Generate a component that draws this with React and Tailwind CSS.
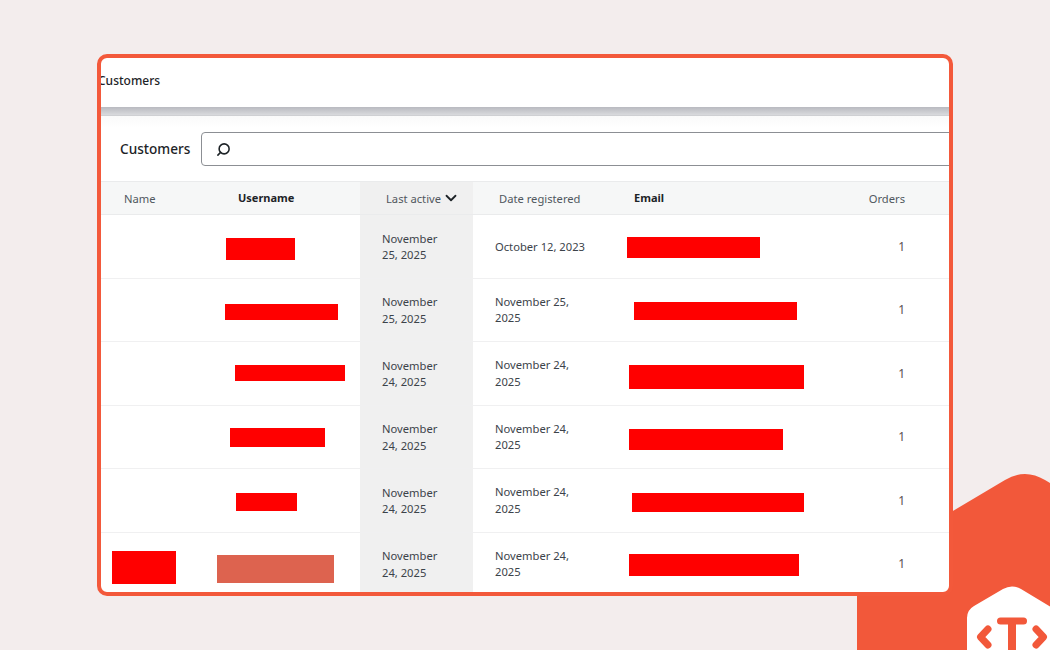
import { ChevronDown, Search } from 'lucide-react';

const rows = [
    { active: ['November', '25, 2025'], registered: ['October 12, 2023'], user: 'ml-[10px] mt-[23px] w-[69px] h-[22px]', email: 'ml-[15px] mt-[22px] w-[133px] h-[21px]' },
    { active: ['November', '25, 2025'], registered: ['November 25,', '2025'], user: 'ml-[9px] mt-[25px] w-[113px] h-[16px]', email: 'ml-[22px] mt-[23px] w-[163px] h-[18px]' },
    { active: ['November', '24, 2025'], registered: ['November 24,', '2025'], user: 'ml-[19px] mt-[23px] w-[110px] h-[16px]', email: 'ml-[17px] mt-[23px] w-[175px] h-[24px]' },
    { active: ['November', '24, 2025'], registered: ['November 24,', '2025'], user: 'ml-[14px] mt-[22px] w-[95px] h-[19px]', email: 'ml-[17px] mt-[23px] w-[154px] h-[21px]' },
    { active: ['November', '24, 2025'], registered: ['November 24,', '2025'], user: 'ml-[20px] mt-[24px] w-[61px] h-[18px]', email: 'ml-[20px] mt-[24px] w-[172px] h-[19px]' },
    { active: ['November', '24, 2025'], registered: ['November 24,', '2025'], name: 'ml-[11px] mt-[18px] w-[64px] h-[33px]', user: 'ml-[1px] mt-[22px] w-[117px] h-[28px] !bg-[#dd634f]', email: 'ml-[17px] mt-[21px] w-[170px] h-[22px]' },
];

const gridCols = 'grid grid-cols-[115px_144px_113px_139px_1fr_109px]';

function Bar({ className }) {
    if (!className) return <div />;
    return <div className={`bg-[#ff0000] ${className}`} />;
}

function Backdrop() {
    return (
        <svg className="absolute inset-0" width="1050" height="650" viewBox="0 0 1050 650">
            <path d="M857 568 L1005 480 Q1025 468 1045 480 L1050 483 V650 H857 Z" fill="#f2583a" />
            <path d="M967 650 V618 Q967 610 974 606 L1003 589 Q1012 584 1021 589 L1050 606.5 V650 Z" fill="#ffffff" />
            <g fill="none" stroke="#f2583a" strokeWidth="7" strokeLinecap="round" strokeLinejoin="round">
                <path d="M988 629 L980.500 637 L988 645" />
                <path d="M1036 629 L1043.500 637 L1036 645" />
                <path d="M1000.500 621 H1023.500" />
            </g>
            <rect x="1008" y="621" width="8" height="29" fill="#f2583a" />
        </svg>
    );
}

export default function App() {
    return (
        <div
            className="relative w-[1050px] h-[650px] overflow-hidden bg-[#f3eded] pt-[54px] pl-[97px] text-[11.200px] leading-[16.5px] text-[#3c434a]"
            style={{ fontFamily: '"Noto Sans", sans-serif' }}
        >
            <Backdrop />
            <div className="relative w-[856px] h-[542px] overflow-hidden rounded-[10px] border-4 border-[#f3593b] bg-white">
                {/* Top bar */}
                <div className="h-[49px] flex items-center -ml-[3px] text-[12px] font-medium text-[#1d2327] pb-[3px]">
                    Customers
                </div>
                <div className="h-[9px] bg-gradient-to-b from-[#b9bac0] to-[#d9dadd] border-b border-[#cfd0d3]" />

                {/* Search */}
                <div className="h-[65px] flex items-center gap-[11px] pl-[19px] pt-[1px] bg-gradient-to-b from-[#fafafa] to-white to-[12px]">
                    <div className="text-[13.600px] font-medium text-[#1d2327] w-[70px] shrink-0">Customers</div>
                    <div className="w-[800px] h-[34px] shrink-0 flex items-center pl-[14px] bg-white border border-[#8c8f94] rounded-[4px]">
                        <Search size={15} strokeWidth={2.5} className="-scale-x-100 text-[#1d2327]" />
                    </div>
                </div>

                {/* Table head */}
                <div className={`${gridCols} h-[34px] items-center bg-[#f6f7f7] border-y border-[#eaebec] text-[#50575e]`}>
                    <div className="pl-[23px] pt-[3px]">Name</div>
                    <div className="pl-[22px] text-[11px] font-bold text-[#1d2327]">Username</div>
                    <div className="h-full flex items-center pl-[26px] bg-[#f0f0f0]">
                        <span className="pt-[3px]">Last active</span>
                        <ChevronDown size={18} strokeWidth={2.4} className="text-[#1d2327] ml-[1px]" />
                    </div>
                    <div className="pl-[26px] pt-[3px]">Date registered</div>
                    <div className="pl-[22px] text-[11px] font-bold text-[#1d2327]">Email</div>
                    <div className="text-right pr-[44px] pt-[3px]">Orders</div>
                </div>

                {/* Rows */}
                {rows.map((row, i) => (
                    <div key={i} className={`${gridCols} h-[63.500px] border-b border-[#f0f0f1]`}>
                        <Bar className={row.name} />
                        <Bar className={row.user} />
                        <div className="flex flex-col justify-center pl-[22px] pt-[2px] bg-[#f0f0f0]">
                            {row.active.map((line) => <div key={line}>{line}</div>)}
                        </div>
                        <div className="flex flex-col justify-center pl-[22px] pt-[1px]">
                            {row.registered.map((line) => <div key={line}>{line}</div>)}
                        </div>
                        <Bar className={row.email} />
                        <div className="flex items-center justify-end pr-[44px] pt-[1px] text-[12px] text-[#5a5050]">1</div>
                    </div>
                ))}
            </div>
        </div>
    );
}
